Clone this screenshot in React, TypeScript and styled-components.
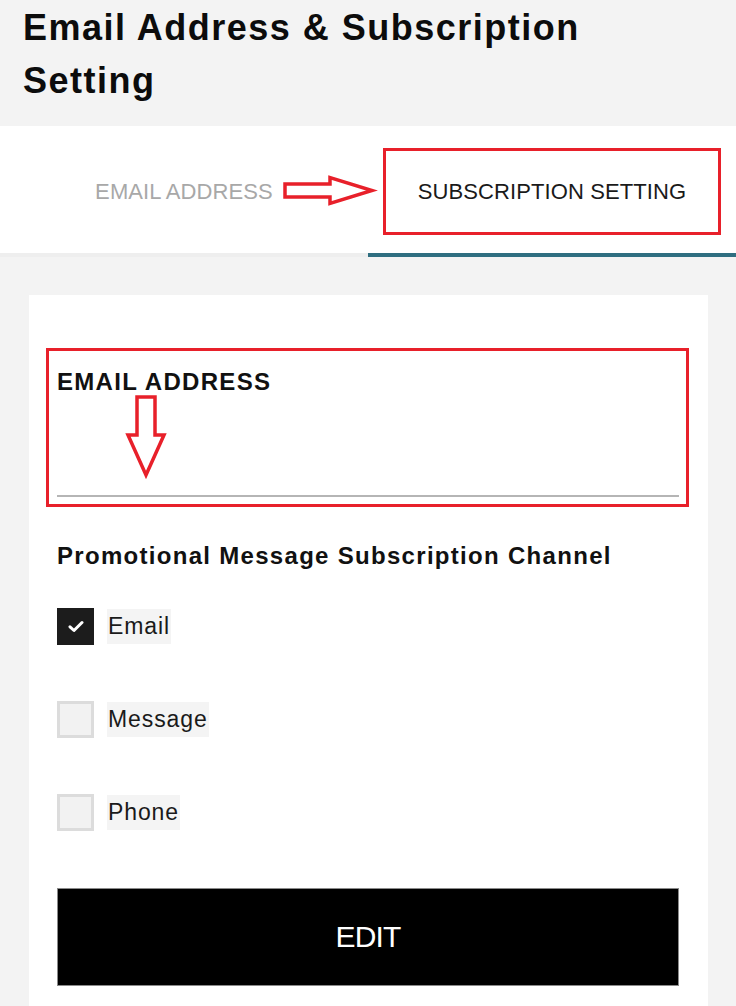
import React from "react";
import styled, { createGlobalStyle } from "styled-components";

const GlobalStyle = createGlobalStyle`
  html, body {
    margin: 0;
    padding: 0;
    background: #f3f3f3;
    font-family: "Liberation Sans", Arial, sans-serif;
    color: #111;
  }
`;

const Page = styled.div`
  width: 736px;
  min-height: 1006px;
  background: #f3f3f3;
  overflow: hidden;
`;

const Header = styled.header`
  height: 126px;
  padding: 0 23px;
  box-sizing: border-box;
`;

const Title = styled.h1`
  margin: 0;
  padding-top: 1px;
  font-size: 36px;
  font-weight: 700;
  line-height: 53px;
  letter-spacing: 1.5px;
  color: #0c0c0c;
`;

const Tabs = styled.nav`
  position: relative;
  display: grid;
  grid-template-columns: 1fr 1fr;
  height: 131px;
  background: #fff;
`;

const Tab = styled.div<{ $active?: boolean }>`
  display: flex;
  align-items: center;
  justify-content: center;
  font-size: 22px;
  font-weight: 400;
  letter-spacing: 0.1px;
  color: ${({ $active }) => ($active ? "#1a1a1a" : "#a8a8a8")};
  border-bottom: 4px solid ${({ $active }) => ($active ? "#2f6e80" : "#eeeeee")};
  padding-top: 4px;
`;

const Mark = styled.div`
  position: absolute;
  border: 3px solid #e8202a;
  pointer-events: none;
`;

const TabMark = styled(Mark)`
  left: 383px;
  top: 22px;
  width: 332px;
  height: 81px;
`;

const ArrowSvg = styled.svg`
  position: absolute;
  overflow: visible;
`;

const RightArrow = styled(ArrowSvg)`
  left: 283px;
  top: 50px;
`;

const Body = styled.main`
  padding: 38px 28px 0 29px;
`;

const Card = styled.section`
  background: #fff;
  padding: 53px 29px 20px 28px;
`;

const Field = styled.div`
  position: relative;
  padding-top: 20px;
  height: 149px;
  box-sizing: border-box;
  border-bottom: 2px solid #b5b5b5;
`;

const FieldMark = styled(Mark)`
  left: -11px;
  top: 0;
  right: -10px;
  height: 153px;
`;

const DownArrow = styled(ArrowSvg)`
  left: 69px;
  top: 47px;
`;

const Label = styled.div`
  font-size: 24px;
  font-weight: 700;
  line-height: 28px;
  letter-spacing: 1.3px;
  color: #111;
`;

const Section = styled.div`
  margin-top: 45px;
`;

const Options = styled.ul`
  list-style: none;
  margin: 38px 0 0;
  padding: 0;
  display: flex;
  flex-direction: column;
  gap: 56px;
`;

const Option = styled.li`
  display: flex;
  align-items: center;
  gap: 13px;
  height: 37px;
`;

const Box = styled.span<{ $checked?: boolean }>`
  width: 37px;
  height: 37px;
  box-sizing: border-box;
  display: flex;
  align-items: center;
  justify-content: center;
  background: ${({ $checked }) => ($checked ? "#1c1c1c" : "#f2f2f2")};
  border: 3px solid ${({ $checked }) => ($checked ? "#1c1c1c" : "#dcdcdc")};
`;

const OptionText = styled.span`
  background: #f4f4f4;
  padding: 3px 1px;
  font-size: 23px;
  line-height: 29px;
  letter-spacing: 0.9px;
  color: #1a1a1a;
`;

const EditButton = styled.button`
  display: block;
  width: 100%;
  height: 98px;
  margin-top: 57px;
  background: #000;
  border: 1px solid #8a8a8a;
  color: #fff;
  font-family: "Liberation Sans", Arial, sans-serif;
  font-size: 30px;
  font-weight: 400;
  letter-spacing: -0.8px;
`;

const channels = [
  { name: "Email", checked: true },
  { name: "Message", checked: false },
  { name: "Phone", checked: false },
];

export default function App() {
  return (
    <Page>
      <GlobalStyle />
      <Header>
        <Title>
          Email Address &amp; Subscription
          <br />
          Setting
        </Title>
      </Header>

      <Tabs>
        <Tab>EMAIL ADDRESS</Tab>
        <Tab $active>SUBSCRIPTION SETTING</Tab>
        <TabMark />
        <RightArrow width="92" height="30" viewBox="0 0 92 30">
          <polygon
            points="2,8 47,8 47,1.5 89,14.5 47,27.5 47,21 2,21"
            fill="#fff"
            stroke="#e8202a"
            strokeWidth="3.5"
          />
        </RightArrow>
      </Tabs>

      <Body>
        <Card>
          <Field>
            <FieldMark />
            <Label>EMAIL ADDRESS</Label>
            <DownArrow width="40" height="82" viewBox="0 0 40 82">
              <polygon
                points="11,2 29,2 29,40 38,40 20,80 2,40 11,40"
                fill="#fff"
                stroke="#e8202a"
                strokeWidth="3.5"
              />
            </DownArrow>
          </Field>

          <Section>
            <Label>Promotional Message Subscription Channel</Label>
            <Options>
              {channels.map((c) => (
                <Option key={c.name}>
                  <Box $checked={c.checked}>
                    {c.checked && (
                      <svg width="16" height="13" viewBox="0 0 16 13">
                        <path
                          d="M2 6.8 L6 10.5 L14 2.5"
                          fill="none"
                          stroke="#fff"
                          strokeWidth="3"
                          strokeLinecap="round"
                          strokeLinejoin="round"
                        />
                      </svg>
                    )}
                  </Box>
                  <OptionText>{c.name}</OptionText>
                </Option>
              ))}
            </Options>
          </Section>

          <EditButton>EDIT</EditButton>
        </Card>
      </Body>
    </Page>
  );
}
